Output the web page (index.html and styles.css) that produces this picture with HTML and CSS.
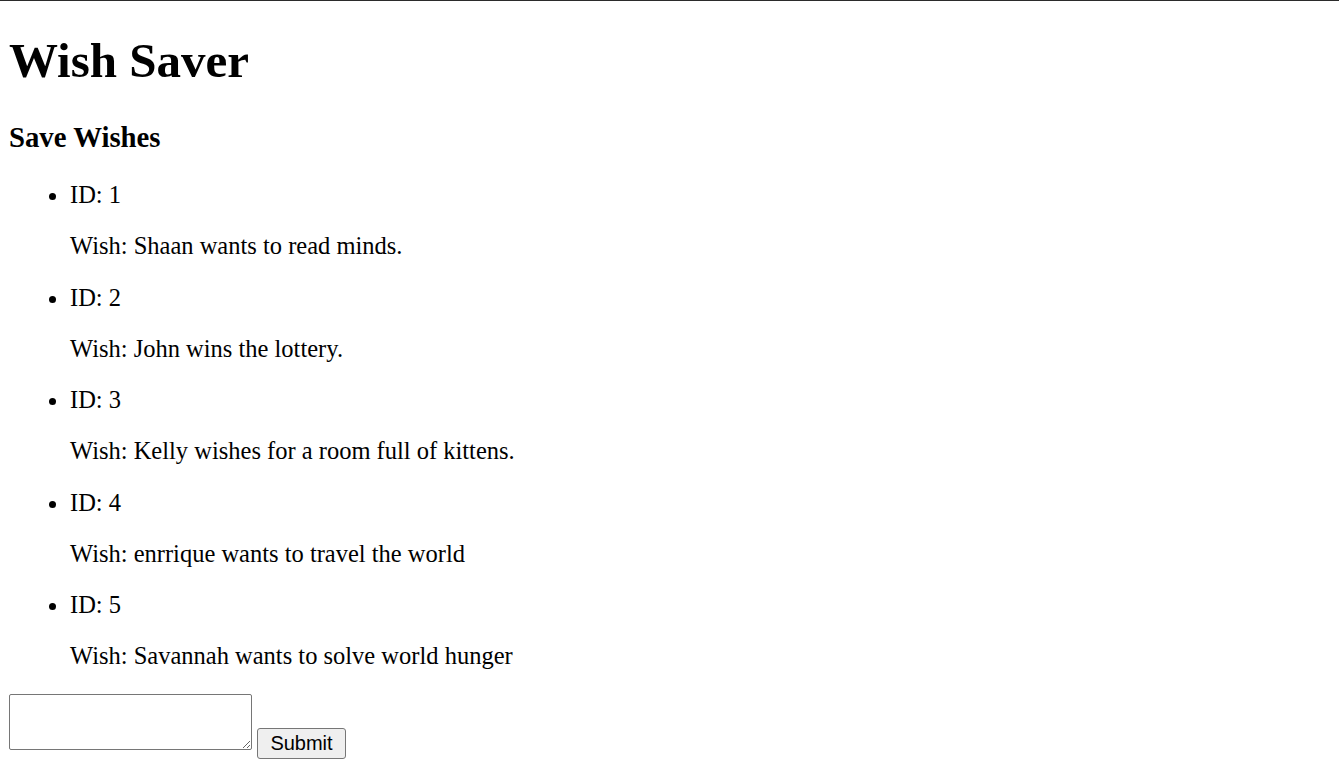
FILE: index.html
```html
<!DOCTYPE html>
<html lang="en" class="page">
<head>
<meta charset="utf-8">
<title>Wish Saver</title>
<link rel="stylesheet" href="styles.css">
</head>
<body class="app">
<h1 class="title">Wish Saver</h1>
<h3 class="subtitle">Save Wishes</h3>
<ul class="wish-list">
  <li class="wish-item">ID: 1<p class="wish-text">Wish: Shaan wants to read minds.</p></li>
  <li class="wish-item">ID: 2<p class="wish-text">Wish: John wins the lottery.</p></li>
  <li class="wish-item">ID: 3<p class="wish-text">Wish: Kelly wishes for a room full of kittens.</p></li>
  <li class="wish-item">ID: 4<p class="wish-text">Wish: enrrique wants to travel the world</p></li>
  <li class="wish-item">ID: 5<p class="wish-text">Wish: Savannah wants to solve world hunger</p></li>
</ul>
<form class="wish-form">
  <textarea class="wish-input"></textarea> <button type="button" class="submit-btn">Submit</button>
</form>
</body>
</html>
```

FILE: styles.css
```css
.page {
  border-top: 1px solid #2b2b2b;
  background: #ffffff;
}
.app {
  margin: 0 9px;
  font-family: "Liberation Serif", "Times New Roman", serif;
  font-size: 24.5px;
  color: #000000;
}
.title {
  font-size: 49px;
  line-height: 56px;
  font-weight: bold;
  margin: 32px 0;
}
.subtitle {
  font-size: 28.75px;
  line-height: 32px;
  font-weight: bold;
  margin: 28px 0;
}
.wish-list {
  margin: 28px 0 24px;
  padding-left: 61px;
}
.wish-item {
  line-height: 27px;
}
.wish-text {
  margin: 24px 0 24.5px;
  line-height: 27px;
}
.wish-form {
  margin: 0;
  padding-top: 0.5px;
  font-size: 20px;
}
.wish-input {
  box-sizing: border-box;
  width: 243px;
  height: 56px;
  border: 1px solid #767676;
  border-radius: 2px;
  padding: 2px;
  margin: 0;
  font-family: "Liberation Mono", monospace;
  font-size: 20px;
  vertical-align: baseline;
}
.submit-btn {
  box-sizing: border-box;
  width: 89px;
  height: 31px;
  padding: 0 12px;
  border: 1px solid #767676;
  border-radius: 3px;
  background: #efefef;
  font-family: "Liberation Sans", Arial, sans-serif;
  font-size: 20px;
  color: #000000;
}
```
